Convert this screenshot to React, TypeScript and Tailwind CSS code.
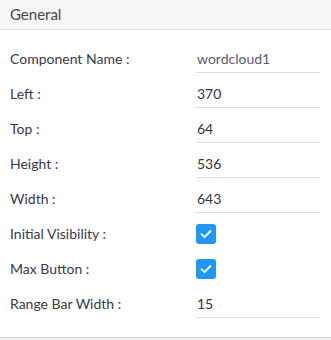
const fields = [
  { label: 'Component Name :', value: 'wordcloud1', muted: true },
  { label: 'Left :', value: '370' },
  { label: 'Top :', value: '64' },
  { label: 'Height :', value: '536' },
  { label: 'Width :', value: '643' },
  { label: 'Initial Visibility :', check: true },
  { label: 'Max Button :', check: true },
  { label: 'Range Bar Width :', value: '15' },
];

function CheckBox() {
  return (
    <div className="w-[20px] h-[20px] rounded-[3px] bg-[#2196f3] flex items-center justify-center">
      <svg width="14" height="14" viewBox="0 0 14 14" fill="none">
        <path d="M2.5 7.2l3 3 6-6.2" stroke="#fff" strokeWidth="1.8" strokeLinecap="round" strokeLinejoin="round" />
      </svg>
    </div>
  );
}

export default function App() {
  return (
    <div className="w-[331px] h-[340px] bg-[#f0f0f0] font-['Lato','Noto_Sans',sans-serif] text-[14px] text-[#3a3a4a]">
      <div className="bg-white border-b border-[#d6d6d6] h-[338px]">
        <div className="h-[30px] bg-[#f7f7f7] border-b border-[#dcdcdc] px-[10px] flex items-center text-[15px] text-[#44444f]">
          General
        </div>
        <div className="pt-[11px]">
          {fields.map((f) => (
            <div key={f.label} className="flex items-center h-[35px]">
              <div className="w-[196px] pl-[10px]">{f.label}</div>
              {f.check ? (
                <CheckBox />
              ) : (
                <div
                  className={`w-[124px] h-[28px] flex items-center pl-[1px] border-b border-[#dedede] ${
                    f.muted ? 'text-[#5a5a72]' : 'text-[#333340]'
                  }`}
                >
                  {f.value}
                </div>
              )}
            </div>
          ))}
        </div>
      </div>
    </div>
  );
}
